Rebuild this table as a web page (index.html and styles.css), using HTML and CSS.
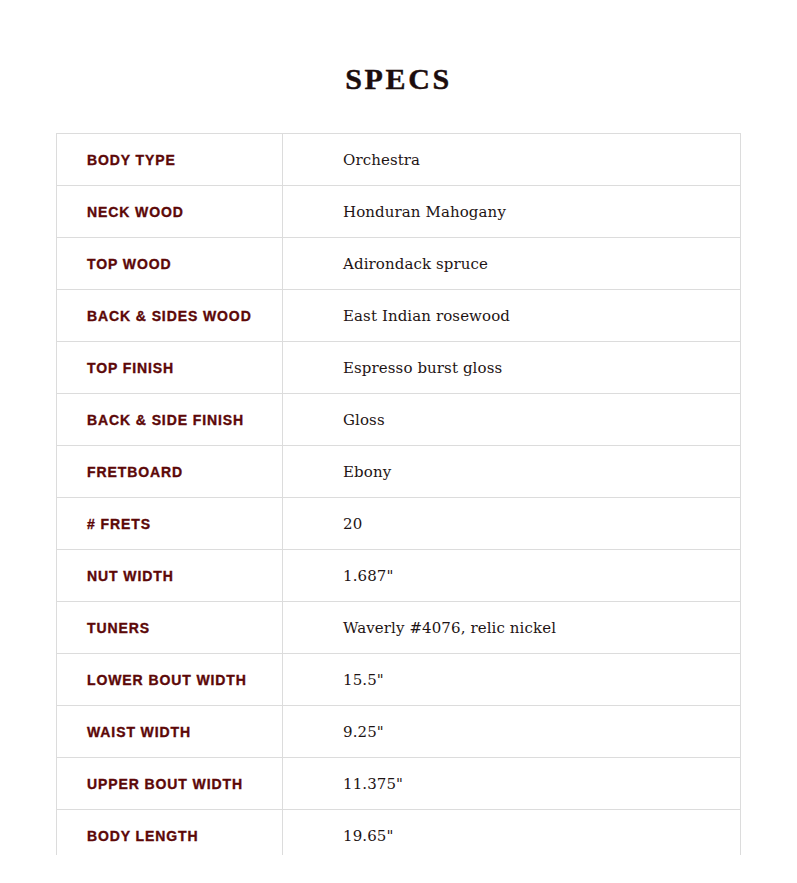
FILE: index.html
```html
<!DOCTYPE html>
<html>
<head>
<meta charset="utf-8">
<link rel="stylesheet" href="styles.css">
</head>
<body>
<section class="specs">
  <h2 class="specs-title">SPECS</h2>
  <div class="specs-frame">
    <table class="specs-table">
      <tr><th>Body Type</th><td>Orchestra</td></tr>
      <tr><th>Neck Wood</th><td>Honduran Mahogany</td></tr>
      <tr><th>Top Wood</th><td>Adirondack spruce</td></tr>
      <tr><th>Back &amp; Sides Wood</th><td>East Indian rosewood</td></tr>
      <tr><th>Top Finish</th><td>Espresso burst gloss</td></tr>
      <tr><th>Back &amp; Side Finish</th><td>Gloss</td></tr>
      <tr><th>Fretboard</th><td>Ebony</td></tr>
      <tr><th># Frets</th><td>20</td></tr>
      <tr><th>Nut Width</th><td>1.687"</td></tr>
      <tr><th>Tuners</th><td>Waverly #4076, relic nickel</td></tr>
      <tr><th>Lower Bout Width</th><td>15.5"</td></tr>
      <tr><th>Waist Width</th><td>9.25"</td></tr>
      <tr><th>Upper Bout Width</th><td>11.375"</td></tr>
      <tr><th>Body Length</th><td>19.65"</td></tr>
    </table>
  </div>
</section>
</body>
</html>
```
FILE: styles.css
```css
html, body {
  margin: 0;
  padding: 0;
  background: #ffffff;
}
.specs {
  width: 685px;
  margin: 0 auto;
  padding-top: 60px;
}
.specs-title {
  margin: 0 0 36px;
  text-align: center;
  font-family: "Liberation Serif", serif;
  font-weight: bold;
  font-size: 30px;
  line-height: 37px;
  letter-spacing: 2.6px;
  color: #1c0d0d;
  -webkit-text-stroke: 0.4px #1c0d0d;
}
.specs-frame {
  height: 722px;
  overflow: hidden;
}
.specs-table {
  width: 100%;
  border-collapse: collapse;
  border: 1px solid #dcdcdc;
}
.specs-table th,
.specs-table td {
  height: 51px;
  padding: 0;
  border-top: 1px solid #dcdcdc;
  vertical-align: middle;
  text-align: left;
}
.specs-table th {
  width: 195px;
  padding-left: 30px;
  border-right: 1px solid #dcdcdc;
  font-family: "Liberation Sans", Arial, sans-serif;
  font-weight: bold;
  font-size: 14px;
  letter-spacing: 0.9px;
  text-transform: uppercase;
  color: #5c0808;
  -webkit-text-stroke: 0.35px #5c0808;
}
.specs-table td {
  padding-left: 60px;
  font-family: "DejaVu Serif", serif;
  font-size: 15px;
  letter-spacing: 0.1px;
  color: #1e1414;
}
```
